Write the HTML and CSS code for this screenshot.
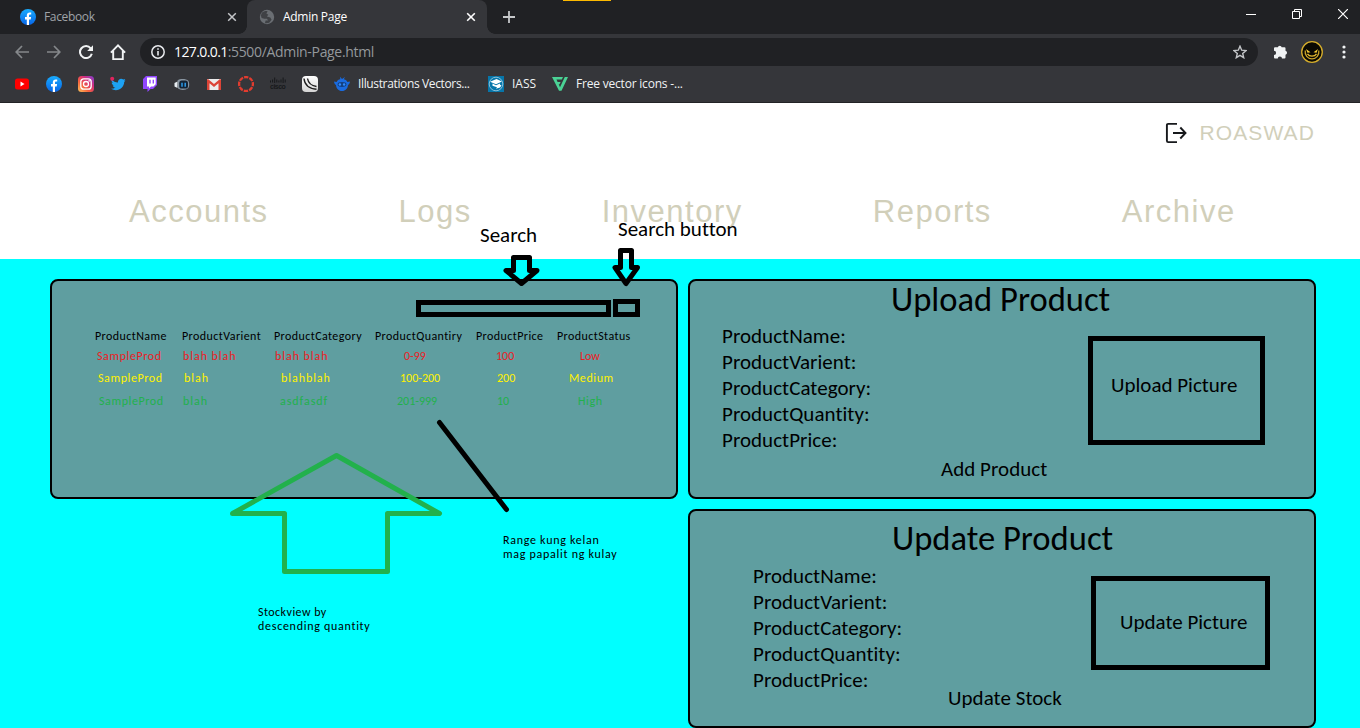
FILE: index.html
```html
<!DOCTYPE html>
<html lang="en">
<head>
<meta charset="utf-8">
<title>Admin Page</title>
<link rel="stylesheet" href="styles.css">
</head>
<body>
<svg class="defs" width="0" height="0">
  <defs>
    <linearGradient id="fbg" x1="0" y1="0" x2="0" y2="1"><stop offset="0" stop-color="#18acfe"/><stop offset="1" stop-color="#0865e8"/></linearGradient>
    <linearGradient id="igg" x1="0" y1="1" x2="1" y2="0"><stop offset="0" stop-color="#fdc65a"/><stop offset=".35" stop-color="#f4633c"/><stop offset=".65" stop-color="#d62f7c"/><stop offset="1" stop-color="#7a3fd0"/></linearGradient>
    <linearGradient id="jg" x1="0" y1="0" x2="0" y2="1"><stop offset="0" stop-color="#fff"/><stop offset="1" stop-color="#d4d4d4"/></linearGradient>
    <symbol id="fb" viewBox="0 0 16 16"><circle cx="8" cy="8" r="8" fill="url(#fbg)"/><path d="M6.800 16v-5.600H5V8.100h1.800V6.500c0-2.100 1.100-3.100 2.900-3.100.6 0 1.100.1 1.500.2v2h-1c-.9 0-1.200.5-1.200 1.200V8.100h2.100l-.4 2.300H9V16z" fill="#fff"/></symbol>
  </defs>
</svg>

<header class="chrome">
  <div class="tabs">
    <div class="tab">
      <svg class="ico" width="16" height="16"><use href="#fb"/></svg>
      <span class="tab-title">Facebook</span>
      <svg class="close" width="10" height="10" viewBox="0 0 10 10"><path d="M1.200 1.200l7.600 7.600M8.800 1.200L1.200 8.800" stroke="#c4c6c9" stroke-width="1.500"/></svg>
    </div>
    <div class="tab active">
      <svg class="ico" width="16" height="16" viewBox="0 0 16 16"><circle cx="8" cy="8" r="7.200" fill="#6a6e73"/><path d="M2.800 3.800C4.800 2 7 1.800 8.600 2.200L7.400 4.600l1.900 1.200-1.400 1.600 3.400 1.200 1.300 2.200-2.400 3C8.500 14.300 7 14.300 6 14l.6-2.600H9L8 9.800H5.400L2.600 9 1.900 6.500z" fill="#3f4145"/></svg>
      <span class="tab-title">Admin Page</span>
      <svg class="close" width="10" height="10" viewBox="0 0 10 10"><path d="M1.200 1.200l7.600 7.600M8.800 1.200L1.200 8.800" stroke="#fff" stroke-width="1.600"/></svg>
    </div>
    <svg class="newtab" width="12" height="12" viewBox="0 0 12 12"><path d="M6 0v12M0 6h12" stroke="#c6c8ca" stroke-width="1.800"/></svg>
    <span class="accent"></span>
    <div class="window-buttons">
      <svg width="10" height="10" viewBox="0 0 10 10"><path d="M0 5.500h10" stroke="#fff"/></svg>
      <svg width="10" height="10" viewBox="0 0 10 10" fill="none" stroke="#fff"><path d="M.5 2.500h7v7h-7zM2.500 2.500v-2h7v7h-2"/></svg>
      <svg width="10" height="10" viewBox="0 0 10 10"><path d="M0 0l10 10M10 0L0 10" stroke="#fff" stroke-width="1.200"/></svg>
    </div>
  </div>

  <div class="toolbar">
    <div class="nav-buttons">
      <svg width="14" height="14" viewBox="0 0 14 14" fill="none" stroke="#85888b" stroke-width="1.700"><path d="M14 7H1.200M7 1L1.200 7 7 13"/></svg>
      <svg width="14" height="14" viewBox="0 0 14 14" fill="none" stroke="#85888b" stroke-width="1.700"><path d="M0 7h12.800M7 1l5.800 6L7 13"/></svg>
      <svg width="14" height="14" viewBox="0 0 14 14"><path d="M11.700 3.300A6 6 0 1 0 12.800 8.700" fill="none" stroke="#f1f3f4" stroke-width="2"/><path d="M14 .2V6H8.200z" fill="#f1f3f4"/></svg>
      <svg class="home" width="16" height="16" viewBox="0 0 16 16"><path d="M.9 8.600L8 1.400l7.100 7.200M3.200 7v8.100h9.600V7" fill="none" stroke="#f1f3f4" stroke-width="1.900"/></svg>
    </div>
    <div class="omnibox">
      <svg width="14" height="14" viewBox="0 0 14 14"><circle cx="7" cy="7" r="6.200" fill="none" stroke="#e8eaed" stroke-width="1.500"/><path d="M7 6v4.500M7 3.300v1.500" stroke="#e8eaed" stroke-width="1.600"/></svg>
      <span class="url"><span class="host">127.0.0.1</span><span class="path">:5500/Admin-Page.html</span></span>
      <svg class="star" width="14" height="14" viewBox="0 0 14 14"><path d="M7 1.200l1.700 4 4.300.4-3.300 2.800 1 4.300L7 10.400l-3.700 2.300 1-4.300L1 5.600l4.300-.4z" fill="none" stroke="#c3c5c8" stroke-width="1.400"/></svg>
    </div>
    <svg class="puzzle" width="15" height="15" viewBox="0 0 15 15"><path d="M4.800 3.200a2 2 0 0 1 3.900 0H11.500a1 1 0 0 1 1 1v2.600a2 2 0 0 1 0 3.900v2.800a1 1 0 0 1-1 1H9a2.100 2.100 0 0 0-4.200 0H2a1 1 0 0 1-1-1v-2.500a2.100 2.100 0 0 0 0-4.200V4.200a1 1 0 0 1 1-1z" fill="#f1f3f4"/></svg>
    <svg class="avatar" width="22" height="22" viewBox="0 0 22 22"><circle cx="11" cy="11" r="10.300" fill="#0a0903" stroke="#d6ae2c" stroke-width="1.300"/><path d="M4.200 9.500C3.600 14 6.500 17.800 11 17.800s7.400-3.800 6.800-8.300" fill="none" stroke="#c9a329" stroke-width="1.300"/><path d="M5 8l4.500 3.200-3 .6zM17 8l-4.500 3.200 3 .6z" fill="#f7cc35"/><path d="M6.500 12.800c1.800 3 7.200 3 9 0" fill="none" stroke="#e6bb30" stroke-width="1.300"/></svg>
    <svg class="menu" width="4" height="14" viewBox="0 0 4 14" fill="#f1f3f4"><circle cx="2" cy="2" r="1.600"/><circle cx="2" cy="7" r="1.600"/><circle cx="2" cy="12" r="1.600"/></svg>
  </div>

  <div class="bookmarks">
    <svg width="16" height="16" viewBox="0 0 16 16"><rect x="1" y="2.500" width="14" height="11" rx="2.500" fill="#f00"/><path d="M6.500 5.600v4.800L10.500 8z" fill="#fff"/></svg>
    <svg width="16" height="16"><use href="#fb"/></svg>
    <svg width="16" height="16" viewBox="0 0 16 16"><rect width="16" height="16" rx="3.500" fill="url(#igg)"/><rect x="2.800" y="2.800" width="10.400" height="10.400" rx="3" fill="none" stroke="#fff" stroke-width="1.300"/><circle cx="8" cy="8" r="2.500" fill="none" stroke="#fff" stroke-width="1.300"/><circle cx="11.100" cy="4.900" r=".8" fill="#fff"/></svg>
    <svg width="16" height="16" viewBox="0 0 16 16"><path d="M1.600 3.600C3.200 5.500 5.500 6.500 8 6.600 7.400 3.300 11.200 1.500 13.300 3.600l2-.6-1.100 1.800 1.300-.2-1.300 1.500C14.200 12 7.500 16.500 1 12.800c1.800.1 3.200-.3 4.400-1.200-1.400-.1-2.300-.9-2.700-2.100l1.200-.1C2.500 9 1.700 7.800 1.700 6.500l1.200.2C1.600 5.800 1.200 4.600 1.600 3.600z" fill="#1da1f2"/><circle cx="2.200" cy="2.700" r="2" fill="#e0245e"/></svg>
    <svg width="16" height="16" viewBox="0 0 16 16"><path d="M4 0h11v9l-4 4H8.500L5.500 16v-3H1V3z" fill="#9146ff"/><path d="M5 1.500h8.700v6.800l-2.200 2.200H9L7 12.400v-1.900H5z" fill="#fff"/><path d="M8 3.700v3.800M11.300 3.700v3.800" stroke="#9146ff" stroke-width="1.400"/></svg>
    <svg width="16" height="16" viewBox="0 0 16 16"><path d="M3.500 4.500C6 2.500 12 2.500 14.500 5c1 2.500 1 5-.2 7-2.500 2.500-7.800 2.500-10.300.5z" fill="#8995a0"/><rect x="5.200" y="4.600" width="8.800" height="8" rx="2.600" fill="#142333"/><path d="M8 6.800v4M11.200 6.800v4" stroke="#2d9be8" stroke-width="1.500"/><path d="M3.500 5.500v6.500L.5 10.500V7z" fill="#e7edf2"/></svg>
    <svg width="16" height="16" viewBox="0 0 16 16"><path d="M1 3h14v11H1z" fill="#ececec"/><path d="M1 14V3.200h1.300L8 8l5.700-4.800H15V14h-2.500V7.200L8 11 3.500 7.200V14z" fill="#dc4437"/></svg>
    <svg width="16" height="16" viewBox="0 0 16 16"><circle cx="8" cy="8" r="6.900" fill="none" stroke="#e23c2f" stroke-width="2.300" stroke-dasharray="4.320 1.100" stroke-dashoffset="2.160"/></svg>
    <span class="cisco"><svg width="16" height="7" viewBox="0 0 16 7"><path d="M.5 3.500v2M2.600 2.500v3M4.700.500v5.500M6.800 2.500v3M8.900 3.500v2M11 2.500v3M13.100.500v5.500M15.200 2.500v3" stroke="#17191b"/></svg><span>cisco</span></span>
    <svg width="16" height="16" viewBox="0 0 16 16"><rect width="16" height="16" rx="4" fill="url(#jg)"/><path d="M2 2.500c.5 6 5 10 12.500 10.800M5.500 2.500c.8 4.500 4 7.300 9 8" fill="none" stroke="#1d1d1d" stroke-width="1.400"/></svg>
    <a class="bookmark b1"><svg width="16" height="16" viewBox="0 0 16 16"><path d="M8 3L6 .8l.3 2.500C4.500 3.500 3.300 4.500 2.600 6L0 5.500c.2 2 .9 3 2 3.500.3 3.500 2.500 6 6 6s5.700-2.500 6-6c1.100-.5 1.800-1.500 2-3.500L13.400 6C12.500 4.300 11.200 3.500 9.800 3.300L11 1z" fill="#1a6be0"/><ellipse cx="8" cy="8.500" rx="4.400" ry="2.400" fill="#15407f"/><circle cx="5.900" cy="8.500" r="1.200" fill="#2f8bff"/><circle cx="10.100" cy="8.500" r="1.200" fill="#2f8bff"/></svg><span>Illustrations Vectors...</span></a>
    <a class="bookmark b2"><svg width="16" height="16" viewBox="0 0 16 16"><path d="M0 0h16v16H0z" fill="#0776aa"/><circle cx="8" cy="8" r="6.800" fill="none" stroke="#a7d0e3" stroke-width=".8"/><path d="M2 5.800L8.500 3 14 5.500 8 8.200zM4.500 7.400L8 9.200l4-1.800v1.300l1.500.8-1.500 2-4 1.300 1-1.500-4.500-1.500z" fill="#fff"/></svg><span>IASS</span></a>
    <a class="bookmark b3"><svg width="16" height="16" viewBox="0 0 16 16"><path d="M0 1h11L9.800 3.500H4.500L5.600 6h3L7.500 8.300H6.700L8 11.200 12.800 1H16L9.500 14.800H7z" fill="#4ad295"/></svg><span>Free vector icons -...</span></a>
  </div>
</header>

<section class="site-head">
  <div class="user">
    <svg width="22" height="22" viewBox="0 0 22 22" fill="none" stroke="#17191c" stroke-width="1.900"><path d="M12 1.900H3.200Q1.900 1.900 1.900 3.200V18.800Q1.900 20.100 3.200 20.100H12"/><path d="M8 11h12.500M15.300 5.500l5.200 5.500-5.200 5.500"/></svg>
    <span>ROASWAD</span>
  </div>
  <nav class="site-nav"><a>Accounts</a><a>Logs</a><a>Inventory</a><a>Reports</a><a>Archive</a></nav>
</section>

<main class="board">
  <section class="panel stock">
    <div class="search"><div class="search-bar"></div><div class="search-btn"></div></div>
    <div class="row head"><span>ProductName</span><span>ProductVarient</span><span>ProductCategory</span><span>ProductQuantiry</span><span>ProductPrice</span><span>ProductStatus</span></div>
    <div class="row low"><span>SampleProd</span><span class="wide">blah blah</span><span class="wide">blah blah</span><span class="num">0-99</span><span class="num">100</span><span class="num">Low</span></div>
    <div class="row medium"><span>SampleProd</span><span class="wide">blah</span><span class="wide">blahblah</span><span class="num">100-200</span><span class="num">200</span><span>Medium</span></div>
    <div class="row high"><span>SampleProd</span><span class="wide">blah</span><span class="wide">asdfasdf</span><span class="num">201-999</span><span class="num">10</span><span>High</span></div>
  </section>
  <div class="side">
    <section class="panel upload">
      <h2>Upload Product</h2>
      <div class="form">
        <ul><li>ProductName:</li><li>ProductVarient:</li><li>ProductCategory:</li><li>ProductQuantity:</li><li>ProductPrice:</li></ul>
        <div class="picture">Upload Picture</div>
      </div>
      <p class="action">Add Product</p>
    </section>
    <section class="panel update">
      <h2>Update Product</h2>
      <div class="form">
        <ul><li>ProductName:</li><li>ProductVarient:</li><li>ProductCategory:</li><li>ProductQuantity:</li><li>ProductPrice:</li></ul>
        <div class="picture">Update Picture</div>
      </div>
      <p class="action">Update Stock</p>
    </section>
  </div>
</main>

<div class="notes">
  <svg width="1360" height="728" viewBox="0 0 1360 728" fill="none" stroke="#000" stroke-width="5" stroke-linejoin="round" stroke-linecap="round">
    <path d="M513.500 257.500h16v13h7.500l-15.500 13-15.500-13h7.500z"/>
    <path d="M620.500 250.500h11v17h6l-11.500 16-11-16h5.500z"/>
    <path d="M439.500 422.500l67 87"/>
    <path d="M336.500 455.500l103 58h-52v58h-103v-58h-52z" stroke="#22b14c"/>
  </svg>
  <span class="note search-note">Search</span>
  <span class="note button-note">Search button</span>
  <span class="note small range-note">Range kung kelan<br>mag papalit ng kulay</span>
  <span class="note small stock-note"><span class="first">Stockview by</span><br>descending quantity</span>
</div>
</body>
</html>
```
FILE: styles.css
```css
* { box-sizing: border-box; }
body { margin: 0; width: 1360px; height: 728px; overflow: hidden; background: #0ff; position: relative; font-family: Carlito, Lato, sans-serif; font-variant-ligatures: none; color: #000; }
svg { display: block; flex: none; }
.defs { position: absolute; }

/* browser frame */
.chrome { height: 103px; background: #35363a; border-bottom: 1px solid #222326; font-family: "Open Sans", sans-serif; font-size: 12px; line-height: 16px; color: #f1f3f4; }
.tabs { height: 34px; background: #202124; display: flex; position: relative; }
.tab { width: 247px; padding: 0 10px 0 20px; display: flex; align-items: center; color: #9fa3a8; letter-spacing: -.35px; }
.tab-title { margin-left: 8px; flex: 1; }
.tab.active { width: 240px; padding: 0 11px 0 12px; background: #35363a; color: #fff; border-radius: 8px 8px 0 0; letter-spacing: -.28px; position: relative; }
.tab.active::before, .tab.active::after { content: ""; position: absolute; bottom: 0; width: 8px; height: 8px; }
.tab.active::before { left: -8px; background: radial-gradient(circle at 0 0, #202124 7.5px, #35363a 8px); }
.tab.active::after { right: -8px; background: radial-gradient(circle at 100% 0, #202124 7.5px, #35363a 8px); }
.newtab { margin: 11px 0 0 16px; }
.accent { position: absolute; left: 563px; top: 0; width: 48px; height: 1px; background: #fdb900; }
.window-buttons { margin: 9px 12px 0 auto; display: flex; gap: 36px; }
.toolbar { height: 36px; padding: 0 14px 0 15px; display: flex; align-items: center; }
.nav-buttons { display: flex; align-items: center; gap: 18px; }
.nav-buttons .home { margin-left: -1px; }
.omnibox { margin-left: 14px; width: 1118px; height: 28px; border-radius: 14px; background: #202124; display: flex; align-items: center; padding: 0 11px; font-size: 14px; }
.url { margin-left: 9px; flex: 1; }
.host { letter-spacing: -.6px; color: #fff; }
.path { letter-spacing: -.33px; color: #94989c; }
.puzzle { margin: -1px 0 0 15px; }
.avatar { margin-left: 13px; }
.menu { margin-left: auto; }
.bookmarks { height: 32px; padding: 0 14px 4px; display: flex; align-items: center; gap: 16px; }
.bookmark { display: flex; align-items: center; }
.bookmark span { margin-left: 8px; white-space: nowrap; }
.b1 { width: 138px; letter-spacing: -.36px; }
.b2 { width: 48px; }
.b3 { letter-spacing: -.2px; }
.cisco { width: 16px; height: 14px; font: bold 7px/6px "Liberation Sans", sans-serif; color: #17191b; letter-spacing: -.5px; }
.cisco span { display: block; }

/* site header */
.site-head { height: 156px; background: #fff; font-family: "Liberation Sans", Arial, sans-serif; color: #d1cfba; }
.user { height: 60px; padding: 0 45px 0 0; display: flex; justify-content: flex-end; align-items: center; gap: 13px; font-size: 21px; letter-spacing: 1.1px; }
.site-nav { margin-top: 31px; padding-left: 129px; display: flex; gap: 130px; font-size: 31px; line-height: 35px; letter-spacing: 1.5px; }

/* panels */
.board { padding: 20px 44px 0 50px; display: flex; gap: 10px; align-items: flex-start; }
.side { display: flex; flex-direction: column; gap: 10px; }
.panel { width: 628px; height: 220px; border: 2px solid #000; border-radius: 8px; background: #5f9ea0; display: flow-root; }
.panel.update { height: 219px; }
.search { margin: 18px 0 12px 364px; display: flex; gap: 2px; align-items: flex-end; }
.search-bar { width: 195px; height: 17px; border: 5px solid #000; }
.search-btn { width: 27px; height: 18px; border: 5px solid #000; }
.row { display: grid; font-size: 12px; line-height: 14px; white-space: nowrap; letter-spacing: .6px; }
.head { grid-template-columns: 87px 92px 101px 101px 81px 1fr; padding-left: 43px; letter-spacing: .42px; }
.low { grid-template-columns: 86px 92px 129px 92px 84px 1fr; padding-left: 45px; margin-top: 6px; color: #ed1c24; }
.medium { grid-template-columns: 86px 97px 119px 97px 72px 1fr; padding-left: 46px; margin-top: 8px; color: #fff200; }
.high { grid-template-columns: 84px 97px 117px 100px 81px 1fr; padding-left: 47px; margin-top: 9px; color: #22b14c; }
.wide { letter-spacing: .95px; }
.num { letter-spacing: 0; }
h2 { margin: 0; font-size: 34.600px; font-weight: 400; line-height: 36px; padding-left: 201px; }
.form { display: flex; justify-content: space-between; align-items: flex-start; }
.form ul { margin: 0; padding: 0; list-style: none; }
.form li, .action, .picture { font-size: 21px; line-height: 26px; letter-spacing: .04px; }
.picture { margin-top: 13px; border: 5px solid #000; letter-spacing: 0; white-space: nowrap; }
.action { margin: 0; }
.upload .form { height: 133px; margin-top: 6px; padding: 0 49px 0 32px; }
.upload .picture { width: 177px; height: 109px; padding: 31px 0 0 18px; }
.upload .action { padding-left: 251px; }
.update h2 { margin-top: 9px; padding-left: 202px; }
.update .form { height: 122px; margin-top: 7px; padding: 0 44px 0 63px; }
.update .picture { width: 179px; height: 94px; padding: 28px 0 0 24px; }
.update .action { padding-left: 258px; }

/* hand-placed annotations over the page */
.notes { position: absolute; inset: 0; }
.note { position: absolute; white-space: nowrap; font-size: 21px; line-height: 26px; }
.search-note { left: 480px; top: 222px; }
.button-note { left: 618px; top: 216px; }
.small { font-size: 12px; line-height: 14px; letter-spacing: .72px; }
.range-note { left: 503px; top: 533px; }
.stock-note { left: 258px; top: 605px; }
.first { letter-spacing: .45px; }
```
